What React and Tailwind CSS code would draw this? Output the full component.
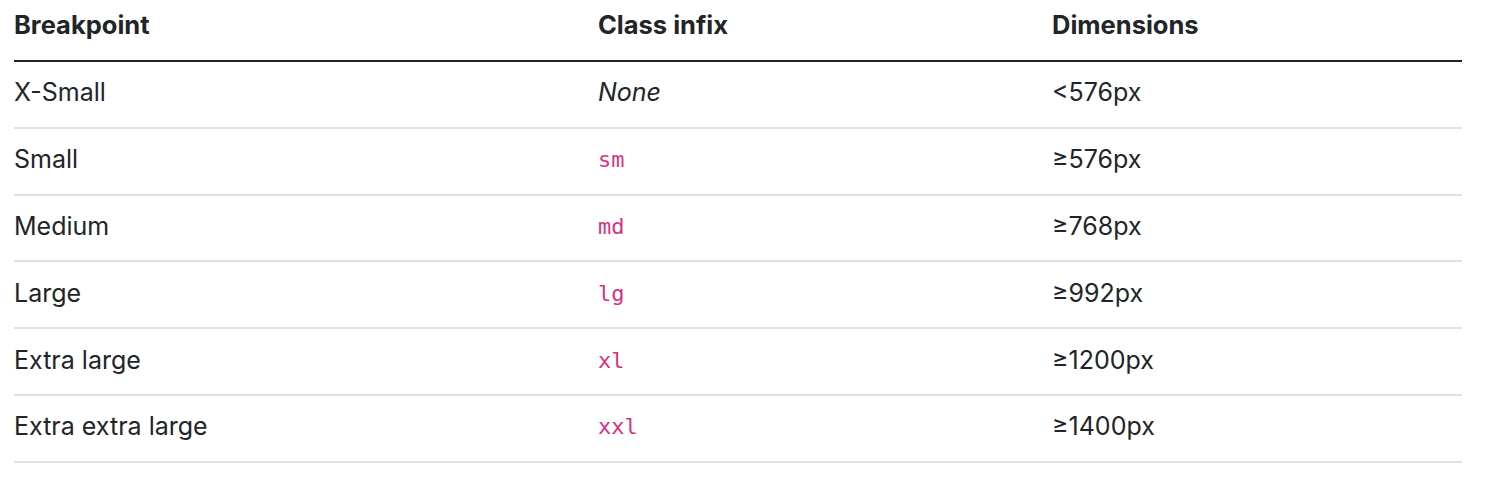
import React from 'react';

const rows = [
    { name: 'X-Small', infix: null, dim: '<576px' },
    { name: 'Small', infix: 'sm', dim: '≥576px' },
    { name: 'Medium', infix: 'md', dim: '≥768px' },
    { name: 'Large', infix: 'lg', dim: '≥992px' },
    { name: 'Extra large', infix: 'xl', dim: '≥1200px' },
    { name: 'Extra extra large', infix: 'xxl', dim: '≥1400px' },
];

const App = () => {
    return (
        <div className="w-[1494px] h-[478px] bg-white text-[#212529] font-['Inter','Liberation_Sans',sans-serif]">
            <table className="ml-[14px] w-[1448px] border-collapse table-fixed text-[25px] leading-[36px]">
                <colgroup>
                    <col className="w-[584px]" />
                    <col className="w-[454px]" />
                    <col className="w-[410px]" />
                </colgroup>
                <thead>
                    <tr className="border-b-2 border-[#212529]">
                        <th className="h-[61px] pt-[7px] align-top text-left font-bold text-[25.5px]">Breakpoint</th>
                        <th className="h-[61px] pt-[7px] align-top text-left font-bold text-[25.5px]">Class infix</th>
                        <th className="h-[61px] pt-[7px] align-top text-left font-bold text-[25.5px]">Dimensions</th>
                    </tr>
                </thead>
                <tbody>
                    {rows.map((r) => (
                        <tr key={r.name} className="border-b-2 border-[#dee2e6]">
                            <td className="h-[66.8px] pb-[4px] align-middle">{r.name}</td>
                            <td className="h-[66.8px] pb-[4px] align-middle">
                                {r.infix ? (
                                    <code className="text-[#d63384] text-[22px] font-['DejaVu_Sans_Mono','Liberation_Mono',monospace]">
                                        {r.infix}
                                    </code>
                                ) : (
                                    <em>None</em>
                                )}
                            </td>
                            <td className="h-[66.8px] pb-[4px] align-middle">{r.dim}</td>
                        </tr>
                    ))}
                </tbody>
            </table>
        </div>
    );
};

export default App;
